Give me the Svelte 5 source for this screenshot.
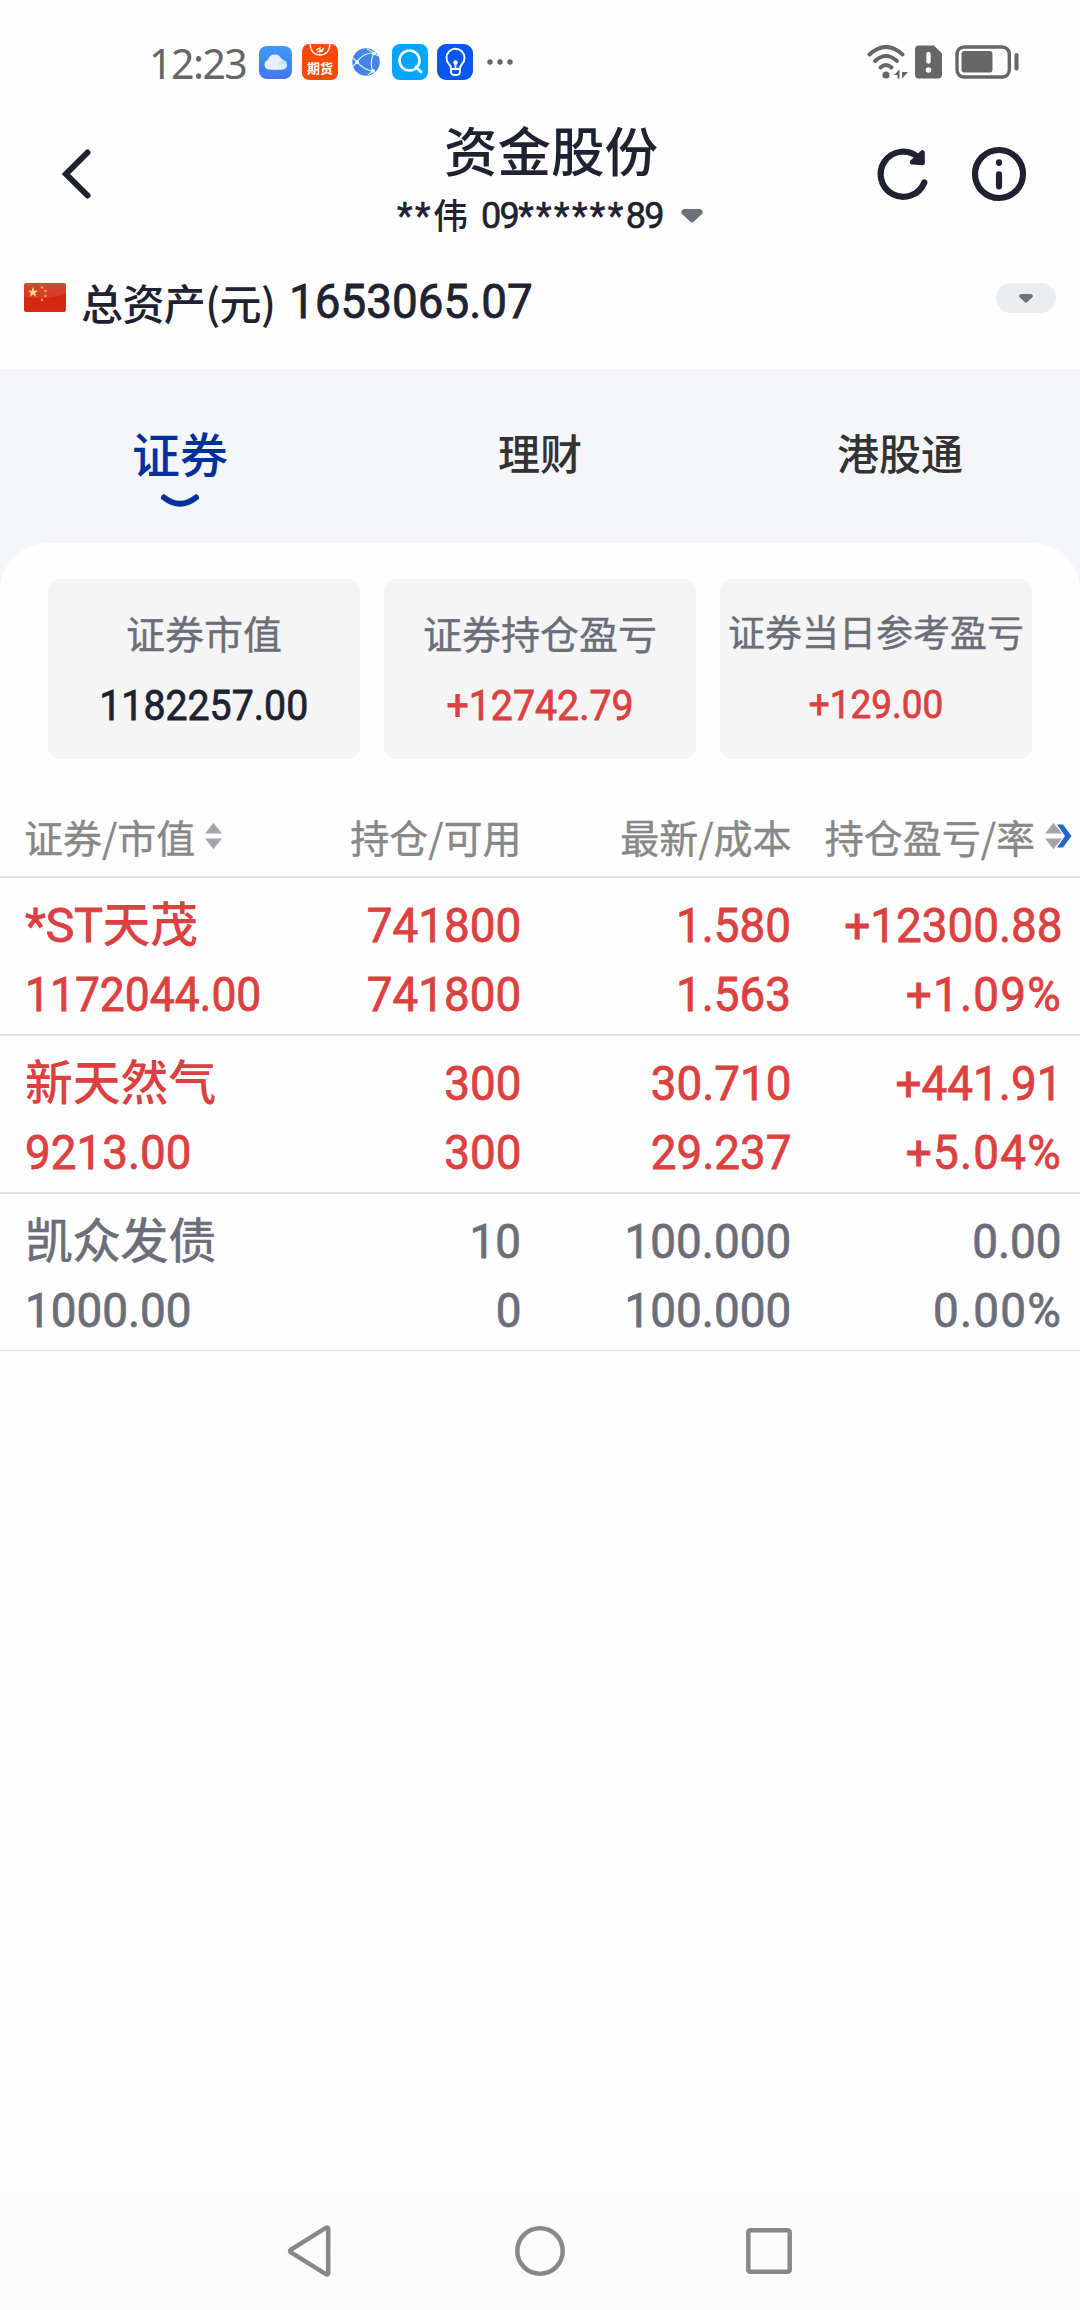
<script>
    let activeTab = '证券';

    const tabs = ['证券', '理财', '港股通'];

    const summary = [
        { label: '证券市值', value: '1182257.00', tone: 'dark' },
        { label: '证券持仓盈亏', value: '+12742.79', tone: 'up' },
        { label: '证券当日参考盈亏', value: '+129.00', tone: 'up', small: true }
    ];

    const holdings = [
        {
            name: '天茂', prefix: '*ST', value: '1172044.00', tone: 'up', tight: true,
            cells: [['741800', '741800'], ['1.580', '1.563'], ['+12300.88', '+1.09%']]
        },
        {
            name: '新天然气', value: '9213.00', tone: 'up',
            cells: [['300', '300'], ['30.710', '29.237'], ['+441.91', '+5.04%']]
        },
        {
            name: '凯众发债', value: '1000.00', tone: 'flat',
            cells: [['10', '0'], ['100.000', '100.000'], ['0.00', '0.00%']]
        }
    ];
</script>

<div class="screen">
    <div class="status">
        <span class="time">12:23</span>
        <div class="apps">
            <svg class="cloud" width="33" height="33" viewBox="0 0 33 33">
                <defs>
                    <linearGradient id="cloudBg" x1="0" y1="0" x2="0" y2="1">
                        <stop offset="0" stop-color="#3d9af8" />
                        <stop offset="1" stop-color="#4376f0" />
                    </linearGradient>
                    <linearGradient id="cloudFront" x1="0" y1="1" x2="1" y2="0">
                        <stop offset="0" stop-color="#fff" />
                        <stop offset="1" stop-color="#b9d6fd" />
                    </linearGradient>
                </defs>
                <rect width="33" height="33" rx="8" fill="url(#cloudBg)" />
                <path d="M9 23.500a5 5 0 0 1 0-9.500a7 7 0 0 1 13.200-1.500a6 6 0 0 1 0 11z" fill="#e4f0ff" />
                <path d="M11 23.500q5-1 7-5t6-4.500a4.800 4.800 0 0 1 0 9.500z" fill="url(#cloudFront)" />
            </svg>
            <svg class="futures" width="36" height="36" viewBox="0 0 36 36">
                <rect width="36" height="36" rx="7" fill="#fd4a06" />
                <path d="M8 0q1 11 10 11t10-11" fill="none" stroke="#fff" stroke-width="1.300" />
                <path d="M14 6l4-2v4l4-4M15 8l3-1M19 8l2-2" fill="none" stroke="#fff" stroke-width="1.200" />
                <text x="18" y="29" text-anchor="middle" class="futures-text">期货</text>
            </svg>
            <svg class="globe" width="28" height="28" viewBox="0 0 28 28">
                <circle cx="14" cy="14" r="13.700" fill="#4285e4" />
                <g fill="none" stroke="#d9e8fb" stroke-width="1.200">
                    <path d="M5 14Q10 5 22 5M5 14q7 8 16 9M22 5q-5 10-1 18M5 14L1 10M5 14l-4 4M22 5l-7-4M21 23l-5 4M22 5l4 3" />
                </g>
                <circle cx="5" cy="14" r="2" fill="#fff" />
                <circle cx="22" cy="5.500" r="2" fill="#fff" />
                <circle cx="21" cy="23" r="2" fill="#fff" />
            </svg>
            <svg class="search" width="36" height="36" viewBox="0 0 36 36">
                <rect width="36" height="36" rx="8" fill="#03a6fd" />
                <circle cx="17.500" cy="16.500" r="10" fill="none" stroke="#fff" stroke-width="2.600" />
                <path d="M24 23l5 5" stroke="#fff" stroke-width="2.800" stroke-linecap="round" />
            </svg>
            <svg class="bulb" width="36" height="36" viewBox="0 0 36 36">
                <rect width="36" height="36" rx="9" fill="#0a57ee" />
                <g fill="none" stroke="#fff" stroke-width="1.900" stroke-linecap="round">
                    <path d="M14 25q0-3-2-5a9 9 0 1 1 13 0q-2 2-2 5z" />
                    <path d="M14 25v3q0 3 4.500 3t4.500-3v-3M18.500 20v4" />
                </g>
                <circle cx="18.500" cy="18.500" r="2.200" fill="#fff" />
            </svg>
            <svg class="more" width="26" height="36" viewBox="0 0 26 36" fill="#666">
                <circle cx="3" cy="18" r="2.700" />
                <circle cx="13" cy="18" r="2.700" />
                <circle cx="23" cy="18" r="2.700" />
            </svg>
        </div>
        <div class="signals">
            <svg width="42" height="34" viewBox="0 0 42 34">
                <g fill="none" stroke="#666" stroke-width="4" stroke-linecap="round">
                    <path d="M2.500 9.500q16.500-15 33 0" />
                    <path d="M8 16q11-10 22 0" />
                    <path d="M13.500 22.500q5.500-5 11 0" />
                </g>
                <circle cx="19" cy="30" r="3.600" fill="#666" />
                <path d="M32.500 24.500v9h-2v-3.500h-3.500zM35 33.500V27h6z" fill="#666" />
            </svg>
            <svg class="sim" width="27" height="34" viewBox="0 0 27 34">
                <path d="M4 .5h15l8 8V29.500q0 4-4 4H4q-4 0-4-4V4.500q0-4 4-4z" fill="#666" />
                <path d="M13.500 9v7.500" stroke="#fff" stroke-width="4.400" stroke-linecap="round" />
                <circle cx="13.500" cy="25" r="2.800" fill="#fff" />
            </svg>
            <svg class="battery" width="64" height="34" viewBox="0 0 64 34">
                <rect x="2" y="2" width="52.300" height="30" rx="7" fill="none" stroke="#666" stroke-width="3.400" />
                <rect x="6.500" y="6" width="31" height="21.500" rx="3" fill="#666" />
                <rect x="59.500" y="8" width="4" height="17.500" rx="2" fill="#666" />
            </svg>
        </div>
    </div>

    <header>
        <button class="back" aria-label="返回">
            <svg width="32" height="56" viewBox="0 0 32 56">
                <path d="M26.500 6.500L5 28l21.500 21.500" fill="none" stroke="#1f2230" stroke-width="6" stroke-linecap="round" />
            </svg>
        </button>
        <div class="heading">
            <h1>资金股份</h1>
            <div class="account">
                <span class="stars">**</span><span class="surname">伟</span><span class="digits">09</span><span class="stars">******</span><span class="digits last">89</span>
                <svg width="22" height="14" viewBox="0 0 22 14">
                    <path d="M3 0h16q3.500 1 2.500 4.500L13 12.500q-2 2-4 0L.5 4.500Q-.5 1 3 0z" fill="#6e707c" />
                </svg>
            </div>
        </div>
        <div class="actions">
            <button aria-label="刷新">
                <svg width="56" height="56" viewBox="0 0 56 56">
                    <path d="M49.300 36.500A22.600 22.600 0 1 1 43.500 11.500" fill="none" stroke="#1f2230" stroke-width="6.200" stroke-linecap="round" />
                    <path d="M47.500 6.500v10.500l-10.500-.7z" fill="#1f2230" stroke="#1f2230" stroke-width="4.600" stroke-linejoin="round" />
                </svg>
            </button>
            <button aria-label="说明">
                <svg width="56" height="56" viewBox="0 0 56 56">
                    <circle cx="28" cy="28" r="24" fill="none" stroke="#1f2230" stroke-width="6.200" />
                    <path d="M28 16.300v.5M28 28.300v12" stroke="#1f2230" stroke-width="6.200" stroke-linecap="round" />
                </svg>
            </button>
        </div>
    </header>

    <div class="total">
        <svg class="flag" width="42" height="29" viewBox="0 0 42 29">
            <defs>
                <linearGradient id="flagBg" x1="0" y1="0" x2="0" y2="1">
                    <stop offset="0" stop-color="#c93a20" />
                    <stop offset=".5" stop-color="#d6230f" />
                    <stop offset="1" stop-color="#d52b12" />
                </linearGradient>
            </defs>
            <rect width="42" height="29" rx="2" fill="url(#flagBg)" />
            <path d="M0 2q0-2 2-2h38q2 0 2 2v9q-20 7-42 3z" fill="#fff" opacity=".09" />
            <path d="M9 4l1.300 3.700h3.900l-3.100 2.400 1.200 3.800L9 11.600l-3.300 2.300 1.200-3.800-3.100-2.400h3.900z" fill="#fbd98a" />
            <g fill="#f0a35c">
                <circle cx="18" cy="4.500" r="1.300" />
                <circle cx="21.500" cy="8" r="1.300" />
                <circle cx="21.500" cy="13" r="1.300" />
                <circle cx="18" cy="17" r="1.300" />
            </g>
        </svg>
        <span class="total-label">总资产(元)</span>
        <span class="num total-value">1653065.07</span>
        <button class="expand" aria-label="展开">
            <svg width="14" height="9" viewBox="0 0 22 14">
                <path d="M3 0h16q3.500 1 2.500 4.500L13 12.500q-2 2-4 0L.5 4.500Q-.5 1 3 0z" fill="#6e707c" />
            </svg>
        </button>
    </div>

    <main>
        <nav class="tabs">
            {#each tabs as tab}
                <button class:active={tab === activeTab} on:click={() => activeTab = tab}>
                    <span>{tab}</span>
                    {#if tab === activeTab}
                        <svg width="40" height="16" viewBox="0 0 40 16">
                            <path d="M4 4.500q16 12.500 32 0" fill="none" stroke="#03309a" stroke-width="6" stroke-linecap="round" />
                        </svg>
                    {/if}
                </button>
            {/each}
        </nav>

        <section class="panel">
            <div class="cards">
                {#each summary as item}
                    <div class="card" class:small={item.small}>
                        <span class="label">{item.label}</span>
                        <span class="num value {item.tone}">{item.value}</span>
                    </div>
                {/each}
            </div>

            <div class="row head">
                <div class="first">
                    证券/市值
                    <svg width="17" height="26" viewBox="0 0 17 26" fill="#a3a4ad">
                        <path d="M8.500 0L17 10.500H0zM0 15.500h17L8.500 26z" />
                    </svg>
                </div>
                <div>持仓/可用</div>
                <div>最新/成本</div>
                <div class="last-head">
                    持仓盈亏/率
                    <svg width="27" height="26" viewBox="0 0 27 26">
                        <path d="M12 1.500h6L26.500 13 18 24.500h-6L20 13z" fill="#2267c9" />
                        <path d="M8.500 0L17 10.500H0zM0 15.500h17L8.500 26z" fill="#a3a4ad" />
                    </svg>
                </div>
            </div>

            {#each holdings as stock}
                <div class="row stock {stock.tone}">
                    <div class="first">
                        <div class="name">{#if stock.prefix}<span class="prefix">{stock.prefix}</span>{/if}{stock.name}</div>
                        <div><span class="num" class:tight={stock.tight}>{stock.value}</span></div>
                    </div>
                    {#each stock.cells as cell}
                        <div>
                            <div><span class="num">{cell[0]}</span></div>
                            <div><span class="num" class:percent={cell[1].endsWith('%')}>{cell[1]}</span></div>
                        </div>
                    {/each}
                </div>
            {/each}
        </section>
    </main>

    <footer>
        <svg width="46" height="54" viewBox="0 0 46 54">
            <path d="M41.200 4.500v45q-.5 1.500-2 .8L4 28.500q-2-1.500 0-3L39.200 3.700q1.500-.7 2 .8z" />
        </svg>
        <svg class="home" width="54" height="54" viewBox="0 0 54 54">
            <circle cx="27" cy="27" r="22.700" />
        </svg>
        <svg width="50" height="54" viewBox="0 0 50 54">
            <rect x="4.300" y="6.300" width="41.400" height="41.400" rx="2" />
        </svg>
    </footer>
</div>

<style>
    :global(body) {
        background-color: #fefefe;
    }

    .screen {
        width: 1080px;
        height: 2310px;
        display: flex;
        flex-direction: column;
        overflow: hidden;
        font-family: "Noto Sans CJK SC", sans-serif;
        color: #1f2230;
        white-space: nowrap;
    }

    svg {
        display: block;
        flex-shrink: 0;
    }

    button {
        border: none;
        background: none;
        padding: 0;
        font-family: inherit;
        color: inherit;
    }

    /* narrow figures */
    .num {
        display: inline-block;
        font-family: Roboto, sans-serif;
        font-weight: 400;
        -webkit-text-stroke: 0.8px currentColor;
        transform: scaleX(0.935);
        transform-origin: right center;
    }

    .up {
        color: #dd4040;
    }

    .flat {
        color: #6b6e79;
    }

    .dark {
        color: #1f2230;
    }

    .status {
        height: 90px;
        box-sizing: border-box;
        padding: 34px 61px 0 149px;
        display: flex;
        align-items: flex-start;
    }

    .time {
        width: 110px;
        font-family: "Noto Sans", sans-serif;
        font-size: 41px;
        line-height: 59px;
        letter-spacing: -1.5px;
        color: #666;
    }

    .apps {
        height: 56px;
        display: flex;
        align-items: center;
    }

    .futures {
        margin-left: 10px;
    }

    .futures-text {
        font-size: 13px;
        font-weight: 700;
        fill: #fff;
    }

    .globe {
        margin-left: 14px;
    }

    .search {
        margin-left: 12px;
    }

    .bulb {
        margin-left: 9px;
    }

    .more {
        margin-left: 14px;
    }

    .signals {
        margin-left: auto;
        padding-top: 11px;
        display: flex;
    }

    .sim {
        margin-left: 6px;
    }

    .battery {
        margin-left: 13px;
    }

    header {
        height: 168px;
        box-sizing: border-box;
        padding: 28px 53px 0 61px;
        display: flex;
        justify-content: space-between;
    }

    .back {
        width: 150px;
        height: 112px;
        display: flex;
        align-items: center;
    }

    .heading {
        display: flex;
        flex-direction: column;
        align-items: center;
        width: 400px;
        margin-left: 14px;
    }

    h1 {
        margin: -4px 0 4px;
        font-size: 53.5px;
        font-weight: 500;
        line-height: 70px;
        transform: translateX(1px);
    }

    .account {
        display: flex;
        align-items: center;
        height: 56px;
        font-size: 35px;
        font-weight: 500;
    }

    .stars {
        font-family: Roboto, sans-serif;
        font-size: 36px;
        font-weight: 400;
        letter-spacing: 2.4px;
        -webkit-text-stroke: 0.6px currentColor;
    }

    .surname {
        margin: -5px 13px 0 0;
    }

    .digits {
        font-family: Roboto, sans-serif;
        font-size: 36px;
        font-weight: 400;
        letter-spacing: -1.6px;
        -webkit-text-stroke: 0.6px currentColor;
    }

    .last {
        margin-right: 18px;
    }

    .actions {
        display: flex;
        gap: 40px;
        height: 112px;
        align-items: center;
    }

    .total {
        height: 111px;
        box-sizing: border-box;
        padding: 10px 24px 0;
        display: flex;
        align-items: flex-start;
    }

    .flag {
        margin-top: 15px;
    }

    .total-label {
        margin-left: 15px;
        width: 208px;
        font-size: 42px;
        font-weight: 500;
        letter-spacing: -0.6px;
        line-height: 68px;
    }

    .total-value {
        font-size: 49px;
        line-height: 67px;
        transform-origin: left center;
    }

    .expand {
        width: 60px;
        height: 30px;
        margin: 15px 0 0 auto;
        border-radius: 15px;
        background-color: #ecedf0;
        display: flex;
        align-items: center;
        justify-content: center;
    }

    main {
        flex: 1;
        display: flex;
        flex-direction: column;
        background: linear-gradient(#f4f6fa 300px, #fefefe 300px);
    }

    .tabs {
        height: 174px;
        display: grid;
        grid-template-columns: repeat(3, 1fr);
    }

    .tabs button {
        display: flex;
        flex-direction: column;
        align-items: center;
        padding-top: 47px;
        font-size: 42px;
        font-weight: 500;
        color: #333;
    }

    .tabs span {
        line-height: 72px;
    }

    .tabs .active {
        font-size: 48px;
        color: #03309a;
    }

    .tabs svg {
        margin-top: 5px;
    }

    .panel {
        flex: 1;
        border-radius: 48px 48px 0 0;
        background-color: #fefefe;
    }

    .cards {
        display: grid;
        grid-template-columns: repeat(3, 1fr);
        gap: 24px;
        padding: 36px 48px 0;
    }

    .card {
        height: 180px;
        box-sizing: border-box;
        padding-top: 18px;
        border-radius: 12px;
        background-color: #f5f5f6;
        display: flex;
        flex-direction: column;
        align-items: center;
    }

    .label {
        font-size: 39px;
        line-height: 70px;
        color: #6b6e79;
        -webkit-text-stroke: 0.4px currentColor;
    }

    .value {
        font-size: 42px;
        line-height: 77px;
        transform-origin: center;
    }

    .small .label {
        font-size: 37px;
        line-height: 69px;
    }

    .small .value {
        font-size: 39.5px;
    }

    .row {
        display: grid;
        grid-template-columns: 271.5px 225px 270px 270.5px;
        padding: 0 18px 0 25px;
        border-bottom: 2px solid #e0e0e0;
        text-align: right;
    }

    .row:last-child {
        border-bottom-width: 1px;
    }

    .first {
        text-align: left;
    }

    .row.head {
        height: 83px;
        margin-top: 34px;
        padding-left: 24px;
        grid-template-columns: 272.5px 225px 270px 270.5px;
        font-size: 39px;
        line-height: 86px;
        color: #888;
        -webkit-text-stroke: 0.4px currentColor;
    }

    .head .first,
    .last-head {
        display: flex;
        align-items: center;
        gap: 10px;
        height: 85px;
    }

    .last-head {
        justify-content: flex-end;
        margin-right: -10px;
    }

    .stock {
        padding-top: 8px;
        padding-bottom: 10px;
        font-size: 49px;
        line-height: 69px;
    }

    .stock > div > div {
        height: 69px;
    }

    .stock .first .num {
        transform-origin: left center;
    }

    .stock .tight {
        font-size: 48px;
        transform: scaleX(0.925);
    }

    .percent {
        letter-spacing: 1.3px;
    }

    .name {
        font-size: 47.8px;
        font-weight: 500;
        line-height: 72px;
    }

    .flat .name {
        font-weight: 400;
        -webkit-text-stroke: 0.7px currentColor;
    }

    .prefix {
        font-family: Roboto, sans-serif;
        font-size: 48.5px;
        font-weight: 400;
        letter-spacing: -0.4px;
        -webkit-text-stroke: 0.8px currentColor;
    }

    footer {
        height: 118px;
        display: flex;
        align-items: center;
        justify-content: center;
        gap: 180px;
        background-color: #fcfcfc;
    }

    footer svg {
        fill: none;
        stroke: #888;
        stroke-width: 4.5;
    }

    .home {
        margin-right: -3px;
    }
</style>
